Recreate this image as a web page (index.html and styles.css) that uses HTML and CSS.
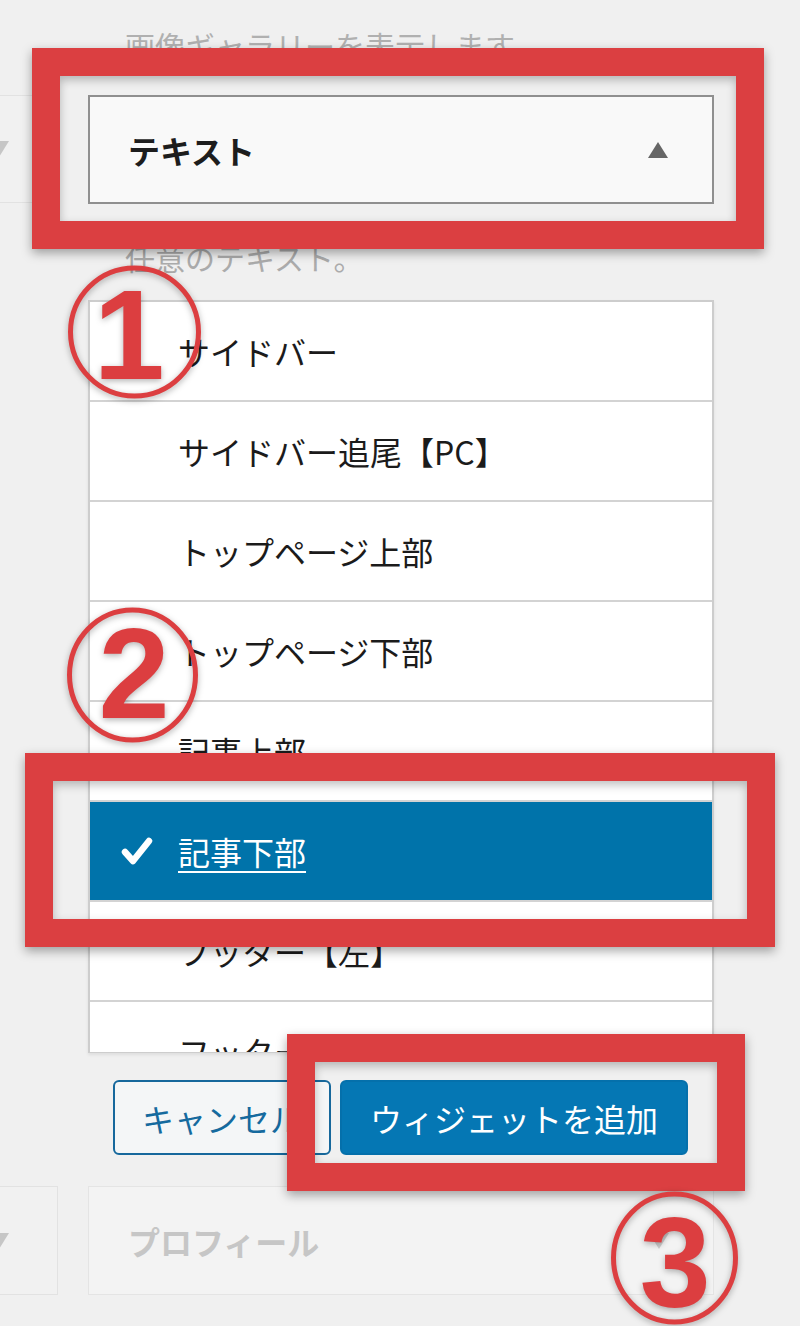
FILE: index.html
```html
<!DOCTYPE html>
<html lang="ja">
<head>
<meta charset="utf-8">
<title>ウィジェット追加</title>
<link rel="stylesheet" href="styles.css">
</head>
<body>
<div class="page">
  <p class="desc desc-top">画像ギャラリーを表示します</p>

  <div class="side-box side-box-top">
    <svg class="tri" width="20" height="16" viewBox="0 0 20 16"><polygon points="0,0 20,0 10,16"/></svg>
  </div>
  <div class="widget-head">
    <span class="widget-title">テキスト</span>
    <svg class="tri-up" width="20" height="16" viewBox="0 0 20 16"><polygon points="10,0 20,16 0,16"/></svg>
  </div>

  <div class="main-body">
    <p class="desc desc-mid">任意のテキスト。</p>
    <ul class="area-list">
      <li class="area"><span class="check"></span><span>サイドバー</span></li>
      <li class="area"><span class="check"></span><span>サイドバー追尾【PC】</span></li>
      <li class="area"><span class="check"></span><span>トップページ上部</span></li>
      <li class="area"><span class="check"></span><span>トップページ下部</span></li>
      <li class="area"><span class="check"></span><span>記事上部</span></li>
      <li class="area selected"><span class="check"><svg width="32" height="30" viewBox="0 0 32 30"><path d="M4 16 L12 25 L28 5" fill="none" stroke="#fff" stroke-width="6.5" stroke-linecap="round" stroke-linejoin="round"/></svg></span><span class="area-name">記事下部</span></li>
      <li class="area"><span class="check"></span><span>フッター【左】</span></li>
      <li class="area"><span class="check"></span><span>フッター【右】</span></li>
    </ul>
    <div class="actions">
      <button class="btn btn-cancel">キャンセル</button>
      <button class="btn btn-add">ウィジェットを追加</button>
    </div>
  </div>

  <div class="side-box side-box-bottom">
    <svg class="tri" width="20" height="16" viewBox="0 0 20 16"><polygon points="0,0 20,0 10,16"/></svg>
  </div>
  <div class="widget-head faded">
    <span class="widget-title">プロフィール</span>
    <svg class="tri-down-faded" width="20" height="16" viewBox="0 0 20 16"><polygon points="0,0 20,0 10,16"/></svg>
  </div>
</div>

<div class="frame frame-1"></div>
<div class="frame frame-2"></div>
<div class="frame frame-3"></div>

<svg class="marks" width="800" height="1326" viewBox="0 0 800 1326">
  <ellipse class="ring" cx="134.5" cy="332" rx="64" ry="64"/>
  <text class="num" x="129" y="379">1</text>
  <ellipse class="ring" cx="132.5" cy="675" rx="63" ry="65"/>
  <text class="num" x="134" y="718">2</text>
  <ellipse class="ring" cx="674.5" cy="1258" rx="61" ry="64"/>
  <text class="num" x="675" y="1307">3</text>
</svg>
</body>
</html>
```

FILE: styles.css
```css
* {
  box-sizing: border-box;
}

body {
  margin: 0;
  width: 800px;
  height: 1326px;
  overflow: hidden;
  position: relative;
  background: #f0f0f0;
  font-family: "Noto Sans CJK JP", "Noto Sans", sans-serif;
  color: #1e1e1e;
}

.page {
  display: grid;
  grid-template-columns: 58px 626px;
  column-gap: 30px;
  padding-top: 25px;
}

.desc {
  margin: 0;
  font-size: 30px;
  line-height: 40px;
  height: 40px;
  color: #b0b0b0;
  padding-left: 37px;
  white-space: nowrap;
}

.desc-top {
  grid-column: 2;
  margin-bottom: 30px;
}

.side-box {
  grid-column: 1;
  display: flex;
  align-items: center;
  justify-content: flex-end;
  padding-right: 48px;
  border: 1px solid #e2e2e2;
  border-left: none;
  background: #f1f1f1;
}

.side-box-top {
  height: 108px;
  align-self: start;
}

.side-box-bottom {
  height: 109px;
}

.tri {
  fill: #c6c6c6;
  flex: none;
}

.widget-head {
  grid-column: 2;
  height: 109px;
  display: flex;
  align-items: center;
  justify-content: space-between;
  padding: 0 44px 0 38px;
  border: 2px solid #8f8f8f;
  background: #f9f9f9;
}

.widget-title {
  font-size: 32px;
  font-weight: 700;
  color: #1d1d1d;
}

.tri-up {
  fill: #666;
}

.widget-head.faded {
  border: 1px solid #e4e4e4;
  background: #f3f3f3;
  padding: 0 44px 0 39px;
}

.widget-head.faded .widget-title {
  color: #c6c6c6;
}

.tri-down-faded {
  fill: #cdcdcd;
}

.main-body {
  grid-column: 2;
  margin-bottom: 31px;
}

.desc-mid {
  margin-top: 33px;
  color: #ababab;
}

.area-list {
  list-style: none;
  margin: 23px 0 0;
  padding: 0;
  height: 753px;
  overflow: hidden;
  background: #fff;
  border: 2px solid #cdcdcd;
  border-width: 2px 2px 1px;
  box-shadow: 0 2px 3px rgba(0, 0, 0, 0.08);
}

.area {
  height: 100px;
  flex: none;
  display: flex;
  align-items: center;
  gap: 25px;
  padding-left: 31px;
  border-bottom: 2px solid #d3d3d3;
  font-size: 32px;
  color: #1b1b1b;
  white-space: nowrap;
}

.check {
  width: 32px;
  height: 30px;
  flex: none;
  display: flex;
}

.area.selected {
  background: #0073aa;
  color: #fff;
}

.area-name {
  text-decoration: underline;
  text-decoration-thickness: 2px;
  text-underline-offset: 6px;
}

.actions {
  display: flex;
  gap: 9px;
  margin-top: 27px;
  padding-left: 25px;
}

.btn {
  height: 75px;
  border-radius: 6px;
  font-family: inherit;
  font-size: 32px;
  padding: 0;
  display: flex;
  align-items: center;
  justify-content: center;
}

.btn-cancel {
  width: 218px;
  background: #f4f6f7;
  color: #156a9e;
  border: 2px solid #16689c;
}

.btn-add {
  width: 348px;
  background: #0577b4;
  color: #fff;
  border: 2px solid #0570ab;
}

.frame {
  position: absolute;
  border: 28px solid #db3f41;
  box-shadow: 0 4px 10px rgba(0, 0, 0, 0.35), inset 0 4px 10px rgba(0, 0, 0, 0.25);
  pointer-events: none;
}

.frame-1 {
  left: 32px;
  top: 48px;
  width: 732px;
  height: 201px;
}

.frame-2 {
  left: 25px;
  top: 753px;
  width: 750px;
  height: 194px;
}

.frame-3 {
  left: 287px;
  top: 1034px;
  width: 458px;
  height: 157px;
}

.marks {
  position: absolute;
  left: 0;
  top: 0;
  pointer-events: none;
  filter: drop-shadow(0 2px 3px rgba(0, 0, 0, 0.3));
}

.ring {
  fill: none;
  stroke: #dc3e40;
  stroke-width: 5;
}

.num {
  font-family: "Liberation Sans", Arial, sans-serif;
  font-weight: 700;
  font-size: 128px;
  fill: #dc3e40;
  text-anchor: middle;
}
```
